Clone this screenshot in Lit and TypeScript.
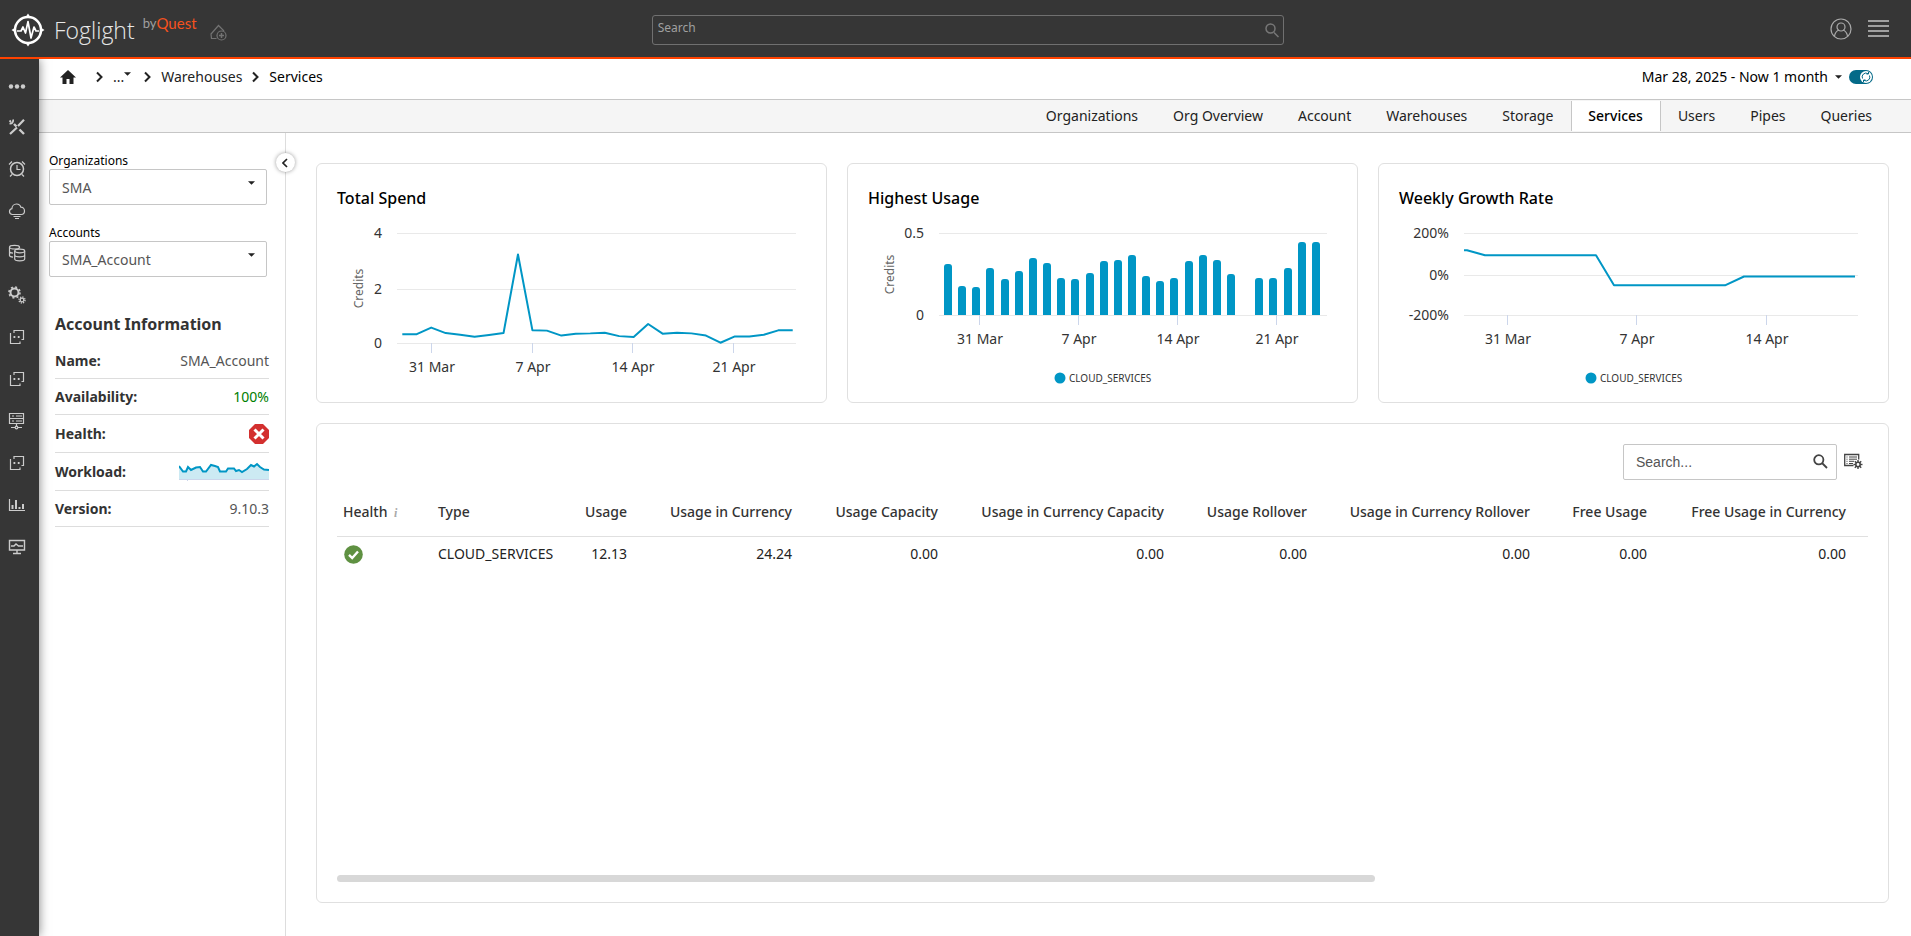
import { LitElement, html, svg, css, nothing } from "lit";
import { customElement, property } from "lit/decorators.js";
import { classMap } from "lit/directives/class-map.js";

const BLUE = "#0096c5";

/* ---------- line icons ---------- */

const dashedWindow = svg`<path d="M6 5V2.500H15.500V11.500H13.500M2.500 5V15.500H12V13.500"/><path d="M5.500 9h1.800M9.800 9h1.800" stroke-width="1.800"/>`;

const navIcons = [
  { name: "More", art: svg`<g fill="#ccc" stroke="none"><circle cx="3" cy="10.500" r="2.200"/><circle cx="9" cy="10.500" r="2.200"/><circle cx="15" cy="10.500" r="2.200"/></g>` },
  { name: "Tools", art: svg`<path d="M2 16 9 9.500M10 8 16 1.800" stroke-width="2.200"/><path d="M6 6 8.500 8.500M11.500 11.500 16 16" stroke-width="2.400"/><path d="M5 1.500a3 3 0 0 1-3.500 4M1.500 2.500l1.500 1.500" stroke-width="1.800"/>` },
  { name: "Alarms", art: svg`<circle cx="9" cy="9" r="6.500" stroke-width="1.500"/><path d="M9 5v4.500h3.500M1 4.500 4 1.500M17 4.500 14 1.500M4 14.500l-2 2M14 14.500l2 2"/>` },
  { name: "Cloud", art: svg`<path d="M4.500 12.500C2.500 12.500 1.500 11.200 1.500 9.500c0-1.500 1-2.500 2.400-2.800C4 4 6 2 8.500 2c2 0 3.800 1.200 4.300 3.200 2 0 3.700 1.600 3.700 3.800 0 2-1.500 3.500-3.300 3.500z"/><path d="M5.500 14.500h7M7 16.500h4"/>` },
  { name: "Databases", art: svg`<ellipse cx="6.500" cy="3.200" rx="5" ry="1.800"/><path d="M1.500 3.200v8.300c0 .8 1.300 1.400 3.500 1.700M1.500 7.500c0 .8 1.300 1.400 3.500 1.700M11.500 3.200v1"/><ellipse cx="11.700" cy="7" rx="5" ry="1.800"/><path d="M6.700 7v8c0 1 2.200 1.800 5 1.800s5-.8 5-1.800V7M6.700 11c0 1 2.200 1.800 5 1.800s5-.8 5-1.800"/>` },
  { name: "Settings", art: svg`<circle cx="6.500" cy="6.500" r="4" stroke-width="2"/><circle cx="6.500" cy="6.500" r="5.500" stroke-width="1.600" stroke-dasharray="2 2.320"/><circle cx="14" cy="14" r="1.800" stroke-width="1.200"/><circle cx="14" cy="14" r="3" stroke-width="1.400" stroke-dasharray="1.200 1.156"/>` },
  { name: "Views", art: dashedWindow },
  { name: "Reports", art: dashedWindow },
  { name: "Hosts", art: svg`<path d="M1.500 1.500h14v5h-14zM1.500 6.500h14v5h-14zM8.500 11.500v3M3 15.500h4M10 15.500h4M4 4h2M4 9h2M8 4h6M8 9h6"/><circle cx="8.500" cy="15.500" r="1.300"/>` },
  { name: "Dashboards", art: dashedWindow },
  { name: "Charts", art: svg`<path d="M1.500 3v11.500H17"/><path d="M4.500 9v4M8 4v9M11.500 11v2M15 8v5" stroke-width="2"/>` },
  { name: "Monitor", art: svg`<path d="M1.500 2.500h15v9.500h-15z" stroke-width="1.400"/><path d="M3 8h3l2-2 2.500 2H15M9 12v3M5 15.500h8" stroke-width="1.400"/>` },
];

const gearTeeth = [0, 45, 90, 135, 180, 225, 270, 315];

/* ---------- charts ---------- */

interface Tick { at: number; label: string; }

@customElement("usage-chart")
export class UsageChart extends LitElement {
  @property({ attribute: false }) values: number[] = [];
  @property({ attribute: false }) points: number[][] = [];
  @property({ attribute: false }) xTicks: Tick[] = [];
  @property({ attribute: false }) yTicks: Tick[] = [];
  @property() kind = "line";
  @property() unit = "";
  @property() legend = "";
  @property({ type: Number }) left = 80;
  @property({ type: Number }) base = 123;
  @property({ type: Number }) first = 85;
  @property({ type: Number }) step = 14;
  @property({ type: Number }) scale = 1;

  static styles = css`
    :host { display: block; }
    svg { display: block; width: 100%; }
    text { font-family: "Noto Sans", sans-serif; font-size: 14px; fill: #333; }
    .unit { font-size: 12px; fill: #666; }
    .legend { font-size: 10px; }
    .grid { stroke: #e9e9e9; }
    .tick { stroke: #ccd6eb; }
    .line { fill: none; stroke: #0096c5; stroke-width: 2; stroke-linejoin: round; }
    .fill { fill: #0096c5; }
  `;

  private bar(v: number, i: number) {
    if (!v) return nothing;
    const x = Math.round(this.first + i * this.step);
    const top = Math.round(this.base - v * this.scale);
    return svg`<path class="fill" d="M${x} ${this.base}V${top + 3}q0-3 3-3h2q3 0 3 3V${this.base}z"/>`;
  }

  render() {
    const pts = this.points.length
      ? this.points
      : this.values.map((v, i) => [this.first + i * this.step, this.base - v * this.scale]);
    const mid = (this.base + 14) / 2;
    return html`<svg viewBox="0 0 509 182" role="img">
      ${this.yTicks.map((t) => svg`
        <line class="grid" x1=${this.left} x2="479" y1=${t.at + 0.5} y2=${t.at + 0.5}></line>
        <text x=${this.left - 15} y=${t.at + 5} text-anchor="end">${t.label}</text>`)}
      ${this.xTicks.map((t) => svg`
        <line class="tick" x1=${t.at + 0.5} x2=${t.at + 0.5} y1=${this.base} y2=${this.base + 10}></line>
        <text x=${t.at + 1} y=${this.base + 29} text-anchor="middle">${t.label}</text>`)}
      ${this.unit ? svg`<text class="unit" text-anchor="middle" transform="translate(46 ${mid}) rotate(-90)">${this.unit}</text>` : nothing}
      ${this.kind === "bar"
        ? this.values.map((v, i) => this.bar(v, i))
        : svg`<polyline class="line" points=${pts.map((p) => p.join(",")).join(" ")}></polyline>`}
      ${this.legend ? svg`<circle class="fill" cx="212" cy="158" r="5.500"></circle><text class="legend" x="221" y="162">${this.legend}</text>` : nothing}
    </svg>`;
  }
}

/* ---------- page ---------- */

const tabs = ["Organizations", "Org Overview", "Account", "Warehouses", "Storage", "Services", "Users", "Pipes", "Queries"];

const spend = [0.315, 0.32, 0.56, 0.36, 0.3, 0.23, 0.29, 0.36, 3.22, 0.46, 0.45, 0.27, 0.34, 0.35, 0.375, 0.25, 0.22, 0.69, 0.34, 0.375, 0.35, 0.27, 0.01, 0.24, 0.24, 0.3, 0.46, 0.46];
const usage = [0.31, 0.18, 0.17, 0.29, 0.22, 0.27, 0.35, 0.32, 0.23, 0.22, 0.26, 0.33, 0.34, 0.37, 0.24, 0.21, 0.23, 0.33, 0.37, 0.34, 0.25, 0, 0.23, 0.23, 0.29, 0.45, 0.45];
const growth = [[85, 30.3], [88, 30.3], [106, 35.3], [217, 35.3], [235, 65.3], [346, 65.3], [365, 56.5], [476, 56.5]];
const workload = [[0, 5], [4, 10.5], [7, 10.5], [9, 6], [12, 9], [17, 6.5], [21, 6], [24, 10.5], [27, 10.5], [32, 4], [36, 5], [39, 6], [41, 10.5], [47, 10.5], [49, 7.5], [55, 7.5], [57, 10], [60, 9], [63, 11], [68, 8], [72, 4], [75, 5.5], [78, 3], [81, 6], [85, 8.5], [90, 9]];

const columns = [
  { label: "Health", width: 80, value: "" },
  { label: "Type", width: 148, value: "CLOUD_SERVICES" },
  { label: "Usage", width: 84, value: "12.13" },
  { label: "Usage in Currency", width: 165, value: "24.24" },
  { label: "Usage Capacity", width: 146, value: "0.00" },
  { label: "Usage in Currency Capacity", width: 226, value: "0.00" },
  { label: "Usage Rollover", width: 143, value: "0.00" },
  { label: "Usage in Currency Rollover", width: 223, value: "0.00" },
  { label: "Free Usage", width: 117, value: "0.00" },
  { label: "Free Usage in Currency", width: 199, value: "0.00" },
];
const tableWidth = columns.reduce((sum, c) => sum + c.width, 0);

@customElement("app-root")
export class AppRoot extends LitElement {
  static styles = css`
    :host {
      display: flex; flex-direction: column; min-height: 100vh;
      font: 14px/20px "Noto Sans", sans-serif; color: #222; background: #fff;
    }
    * { box-sizing: border-box; }
    svg { display: block; flex: none; }
    button { border: 0; padding: 0; background: none; font: inherit; color: inherit; cursor: pointer; }
    a { color: inherit; text-decoration: none; }
    h2, ol, ul, dl, dd { margin: 0; padding: 0; list-style: none; }

    .top {
      display: grid; grid-template-columns: 34.1% 33.1% 1fr; height: 59px;
      background: #363636; border-bottom: 2px solid #ff4200;
    }
    .brand { display: flex; align-items: flex-start; padding: 13px 0 0 11px; }
    .product { margin-left: 9px; padding-top: 4px; font: 300 23px/26px "Open Sans", sans-serif; color: #e8e8e8; }
    .by { display: flex; margin-left: 8px; font: 13px/20px Lato, sans-serif; color: #a0a0a0; }
    .quest { color: #f4511e; font-size: 15px; }
    .addhome { margin: 11px 0 0 13px; }
    .find { position: relative; align-self: start; margin-top: 15px; height: 30px; }
    .find input {
      width: 100%; height: 30px; border: 1px solid #707070; border-radius: 3px; background: none;
      padding: 0 30px 5px 5px; font: 12px "Noto Sans", sans-serif; color: #ddd;
    }
    .find input::placeholder { color: #a0a0a0; opacity: 1; }
    .find svg { position: absolute; right: 5px; top: 8px; }
    .actions { display: flex; justify-content: flex-end; align-items: flex-start; gap: 16px; padding: 18px 22px 0 0; }

    .frame { flex: 1; display: flex; }
    .rail { width: 39px; background: #363636; padding-top: 5px; box-shadow: 0 0 10px rgba(0, 0, 0, 0.5); z-index: 1; clip-path: inset(0 -14px 0 0); }
    .rail button { display: grid; place-items: center; width: 34px; height: 42px; }
    .rail svg { fill: none; stroke: #ccc; stroke-width: 1.2; }
    .page { flex: 1; min-width: 0; display: flex; flex-direction: column; }

    .crumbs { display: flex; align-items: center; height: 41px; padding: 0 38px 4px 21px; border-bottom: 1px solid #c6c6c6; }
    .trail { display: flex; align-items: center; gap: 10px; flex: 1; }
    .trail .home { margin-right: 10px; }
    .levels { display: flex; padding-right: 3px; }
    .levels svg { margin-top: 5px; }
    .now { color: #000; }
    .range { display: flex; align-items: center; gap: 7px; color: #000; }
    .live { position: relative; display: flex; }
    .live input { appearance: none; margin: 0; width: 24px; height: 14px; border-radius: 7px; background: #046a88; }
    .live svg { position: absolute; right: 1px; top: 1px; pointer-events: none; }

    .tabs { display: flex; justify-content: flex-end; height: 33px; padding: 1px 21px; background: #f5f5f5; border-bottom: 1px solid #c6c6c6; }
    .tab { padding: 0 18px 0 17px; line-height: 30px; }
    .tab.on { background: #fff; color: #000; font-weight: 500; padding: 0 17px 0 16px; border: solid #c6c6c6; border-width: 0 1px; }

    .body { flex: 1; display: flex; }
    .side { position: relative; width: 247px; border-right: 1px solid #ddd; padding: 19px 18px 0 10px; }
    .fold {
      position: absolute; right: -10px; top: 20px; width: 19px; height: 19px; border-radius: 50%; padding-right: 2px;
      background: #fff; box-shadow: 0 0 4px rgba(0, 0, 0, 0.4); display: grid; place-items: center;
    }
    .field { position: relative; margin-bottom: 19px; }
    .field label { display: block; font-size: 12px; line-height: 17px; color: #000; }
    .field select {
      appearance: none; width: 100%; height: 36px; border: 1px solid #c6c6c6; border-radius: 2px;
      background: #fff; padding: 0 12px; font: 14px "Noto Sans", sans-serif; color: #555;
    }
    .field svg { position: absolute; right: 12px; top: 29px; pointer-events: none; }
    .side h2 { margin: 36px 0 8px 6px; font-size: 16px; line-height: 22px; color: #333; }
    .info { margin: 0 -2px 0 6px; }
    .info div { display: flex; justify-content: space-between; align-items: center; min-height: 36px; padding: 0; border-bottom: 1px solid #ddd; }
    .info .tall { min-height: 38px; }
    .info dt { font-weight: 700; color: #333; }
    .info dd { color: #555; }
    .info .ok { color: #008000; }

    .main { flex: 1; min-width: 0; display: flex; flex-direction: column; gap: 20px; padding: 30px 22px 33px 30px; }
    .row { display: grid; grid-template-columns: repeat(3, 1fr); gap: 20px; }
    .card { border: 1px solid #e0e0e0; border-radius: 6px; }
    .card h2 { padding: 22px 20px 10px; font-size: 16px; line-height: 24px; font-weight: 500; color: #000; }
    .list { flex: 1; display: flex; flex-direction: column; padding: 20px; }
    .tools { display: flex; justify-content: flex-end; gap: 7px; padding: 0 5px 8px 0; }
    .search { position: relative; }
    .search input { width: 214px; height: 36px; border: 1px solid #c6c6c6; border-radius: 2px; padding: 0 36px 0 12px; font: 14px "Liberation Sans", sans-serif; }
    .search input::placeholder { color: #555; opacity: 1; }
    .search svg { position: absolute; right: 9px; top: 10px; }
    .tools button { align-self: flex-start; margin-top: 9px; }
    .scroll { flex: 1; overflow: hidden; }
    table { width: 100%; table-layout: fixed; border-collapse: collapse; white-space: nowrap; }
    th { height: 48px; padding: 0 22px 0 0; border-bottom: 1px solid #e0e0e0; text-align: right; font-weight: 500; color: #333; }
    td { height: 36px; padding: 0 22px 0 0; text-align: right; }
    .start { text-align: left; padding: 0 0 0 21px; }
    .health { text-align: left; padding: 0 0 0 6px; }
    .hint { margin-left: 3px; font: italic 700 12px "Liberation Serif", serif; color: #aaa; }
    .bar { height: 7px; }
    .thumb { height: 7px; border-radius: 4px; background: #d8d8d8; }
  `;

  private chevron() {
    return html`<svg width="7" height="12" viewBox="0 0 7 12" fill="none" stroke="#222" stroke-width="2"><path d="M1 1.500 5.500 6 1 10.500"/></svg>`;
  }

  private caret(w = 8, h = 4) {
    return html`<svg width=${w} height=${h} viewBox="0 0 8 4" fill="#222"><path d="M0 0h8L4 4z"/></svg>`;
  }

  private header() {
    return html`<header class="top">
      <div class="brand">
        <svg width="34" height="34" viewBox="0 0 34 34" fill="none" stroke="#fff">
          <circle cx="17" cy="17" r="13" stroke-width="2.500"/>
          <path d="M17 .5 20 5h-6zM17 33.500 20 29h-6zM.5 17 5 14v6zM33.500 17 29 14v6z" fill="#fff" stroke="none"/>
          <path d="M6 18h4l2-4 2.500 6L17 8.500 20 25l3-11 2 4h3" stroke-width="1.700" stroke-linejoin="round"/>
        </svg>
        <span class="product">Foglight</span>
        <span class="by">by<span class="quest">Quest</span></span>
        <button class="addhome" aria-label="Add to home">
          <svg width="17" height="17" viewBox="0 0 17 17" fill="none" stroke="#737373" stroke-width="1.200">
            <path d="M6.500 14.500h-5L1 10 8.500 1.500 14 7"/><circle cx="11.500" cy="11.500" r="4.500"/><path d="M11.500 9v5M9 11.500h5" stroke-width="1.500"/>
          </svg>
        </button>
      </div>
      <div class="find">
        <input type="text" aria-label="Search" placeholder="Search" />
        <svg width="14" height="15" viewBox="0 0 14 15" fill="none" stroke="#777" stroke-width="1.500"><circle cx="5.500" cy="5.500" r="4.500"/><path d="M9 9.500 13.500 14"/></svg>
      </div>
      <div class="actions">
        <button aria-label="Account"><svg width="22" height="22" viewBox="0 0 22 22" fill="none" stroke="#aaa" stroke-width="1.200"><circle cx="11" cy="11" r="10"/><circle cx="11" cy="9" r="4"/><path d="M4.500 18c.5-3 2-5 4.500-6M17.500 18c-.5-3-2-5-4.500-6"/></svg></button>
        <button aria-label="Menu"><svg width="21" height="22" viewBox="0 0 21 22" fill="#a0a0a0"><path d="M0 2h21v2H0zM0 7h21v2H0zM0 12h21v2H0zM0 17h21v2H0z"/></svg></button>
      </div>
    </header>`;
  }

  private crumbs() {
    return html`<div class="crumbs">
      <nav class="trail" aria-label="Breadcrumb">
        <a class="home" href="#" aria-label="Home"><svg width="16" height="14" viewBox="0 0 16 14" fill="#222"><path d="M8 0 16 7.500h-2.500V14H9.500V9h-3v5H2.500V7.500H0z"/></svg></a>
        ${this.chevron()}
        <button class="levels" aria-label="More levels">...${this.caret(7, 4)}</button>
        ${this.chevron()}
        <a href="#">Warehouses</a>
        ${this.chevron()}
        <a class="now" href="#">Services</a>
      </nav>
      <div class="range">
        <button class="range">Mar 28, 2025 - Now 1 month ${this.caret(7, 4)}</button>
        <label class="live"><input type="checkbox" aria-label="Auto refresh" checked />
          <svg width="12" height="12" viewBox="0 0 12 12" fill="none" stroke="#046a88"><circle cx="6" cy="6" r="6" fill="#fff" stroke="none"/><path d="M2.500 7.500A3.800 3.800 0 0 1 8 2.700M9.500 4.500A3.800 3.800 0 0 1 4 9.300M8.500 1v2h-2M3.500 11V9h2"/></svg>
        </label>
      </div>
    </div>
    <nav class="tabs">
      ${tabs.map((t) => html`<a href="#" class=${classMap({ tab: true, on: t === "Services" })}>${t}</a>`)}
    </nav>`;
  }

  private field(id: string, label: string, value: string) {
    return html`<div class="field">
      <label for=${id}>${label}</label>
      <select id=${id}><option>${value}</option></select>
      ${this.caret(7, 4)}
    </div>`;
  }

  private side() {
    const line = workload.map((p) => p.join(",")).join(" ");
    return html`<aside class="side">
      <button class="fold" aria-label="Collapse panel"><svg width="6" height="10" viewBox="0 0 6 10" fill="none" stroke="#222" stroke-width="1.700"><path d="M5 1 1 5l4 4"/></svg></button>
      ${this.field("org", "Organizations", "SMA")}
      ${this.field("acc", "Accounts", "SMA_Account")}
      <h2>Account Information</h2>
      <dl class="info">
        <div><dt>Name:</dt><dd>SMA_Account</dd></div>
        <div><dt>Availability:</dt><dd class="ok">100%</dd></div>
        <div class="tall"><dt>Health:</dt><dd><svg width="20" height="20" viewBox="0 0 20 20"><path d="M6 0h8l6 6v8l-6 6H6l-6-6V6z" fill="#d3302f"/><path d="m5.500 5.500 9 9m0-9-9 9" stroke="#fff" stroke-width="3"/></svg></dd></div>
        <div class="tall"><dt>Workload:</dt><dd><svg width="90" height="22" viewBox="0 0 90 22"><polygon points="0,18 ${line} 90,18" fill="#cceaf3"/><path d="M0 18.500h90M8.500 18v2" stroke="#ccd6eb"/><polyline points=${line} fill="none" stroke=${BLUE} stroke-width="2"/></svg></dd></div>
        <div><dt>Version:</dt><dd>9.10.3</dd></div>
      </dl>
    </aside>`;
  }

  private charts() {
    return html`<div class="row">
      <section class="card"><h2>Total Spend</h2>
        <usage-chart unit="Credits" left="80" base="123" first="85.3" step="14.46" scale="27.5" .values=${spend}
          .yTicks=${[{ at: 13, label: "4" }, { at: 69, label: "2" }, { at: 123, label: "0" }]}
          .xTicks=${[{ at: 114, label: "31 Mar" }, { at: 215, label: "7 Apr" }, { at: 315, label: "14 Apr" }, { at: 416, label: "21 Apr" }]}></usage-chart>
      </section>
      <section class="card"><h2>Highest Usage</h2>
        <usage-chart kind="bar" unit="Credits" legend="CLOUD_SERVICES" left="91" base="95" first="96" step="14.15" scale="163" .values=${usage}
          .yTicks=${[{ at: 13, label: "0.5" }, { at: 95, label: "0" }]}
          .xTicks=${[{ at: 131, label: "31 Mar" }, { at: 230, label: "7 Apr" }, { at: 329, label: "14 Apr" }, { at: 428, label: "21 Apr" }]}></usage-chart>
      </section>
      <section class="card"><h2>Weekly Growth Rate</h2>
        <usage-chart legend="CLOUD_SERVICES" left="85" base="95" .points=${growth}
          .yTicks=${[{ at: 13, label: "200%" }, { at: 55, label: "0%" }, { at: 95, label: "-200%" }]}
          .xTicks=${[{ at: 128, label: "31 Mar" }, { at: 257, label: "7 Apr" }, { at: 387, label: "14 Apr" }]}></usage-chart>
      </section>
    </div>`;
  }

  private list() {
    const cls = (i: number) => classMap({ health: i === 0, start: i === 1 });
    return html`<section class="card list">
      <div class="tools">
        <div class="search">
          <input type="search" aria-label="Search services" placeholder="Search..." />
          <svg width="15" height="15" viewBox="0 0 15 15" fill="none" stroke="#444" stroke-width="1.800"><circle cx="5.800" cy="5.800" r="4.600"/><path d="m9 9 5 5"/></svg>
        </div>
        <button aria-label="Configure table">
          <svg width="19" height="17" viewBox="0 0 19 17" fill="none" stroke="#444"><path d="M9.500 12.500H.7V1.500h14v5" stroke-width="1.300"/><path d="M2.500 4h1M5 4h8M2.500 6.200h1M5 6.200h8M2.500 8.300h1M5 8.300h5M2.500 10.500h1M5 10.500h4"/><circle cx="14" cy="11.500" r="2.200" stroke-width="1.600"/>${gearTeeth.map((a) => svg`<path d="M14 9V7" stroke-width="1.400" transform="rotate(${a} 14 11.500)"/>`)}</svg>
        </button>
      </div>
      <div class="scroll">
        <table>
          <colgroup>${columns.map((c) => html`<col style="width:${((c.width / tableWidth) * 100).toFixed(3)}%" />`)}</colgroup>
          <thead><tr>${columns.map((c, i) => html`<th class=${cls(i)} scope="col">${c.label}${i === 0 ? html` <span class="hint">i</span>` : nothing}</th>`)}</tr></thead>
          <tbody><tr>${columns.map((c, i) => html`<td class=${cls(i)}>${i === 0
            ? html`<svg width="20" height="19" viewBox="0 0 20 19" role="img" aria-label="Normal"><circle cx="10.500" cy="9.500" r="9.300" fill="#5f9142"/><path d="m6 9.800 3.200 3.200L15 6.500" fill="none" stroke="#fff" stroke-width="2.400"/></svg>`
            : c.value}</td>`)}</tr></tbody>
        </table>
      </div>
      <div class="bar"><div class="thumb" style="width:67.8%"></div></div>
    </section>`;
  }

  render() {
    return html`${this.header()}
      <div class="frame">
        <nav class="rail" aria-label="Main">
          ${navIcons.map((n) => html`<button aria-label=${n.name}><svg width="18" height="18" viewBox="0 0 18 18">${n.art}</svg></button>`)}
        </nav>
        <div class="page">
          ${this.crumbs()}
          <div class="body">
            ${this.side()}
            <main class="main">${this.charts()}${this.list()}</main>
          </div>
        </div>
      </div>`;
  }
}
